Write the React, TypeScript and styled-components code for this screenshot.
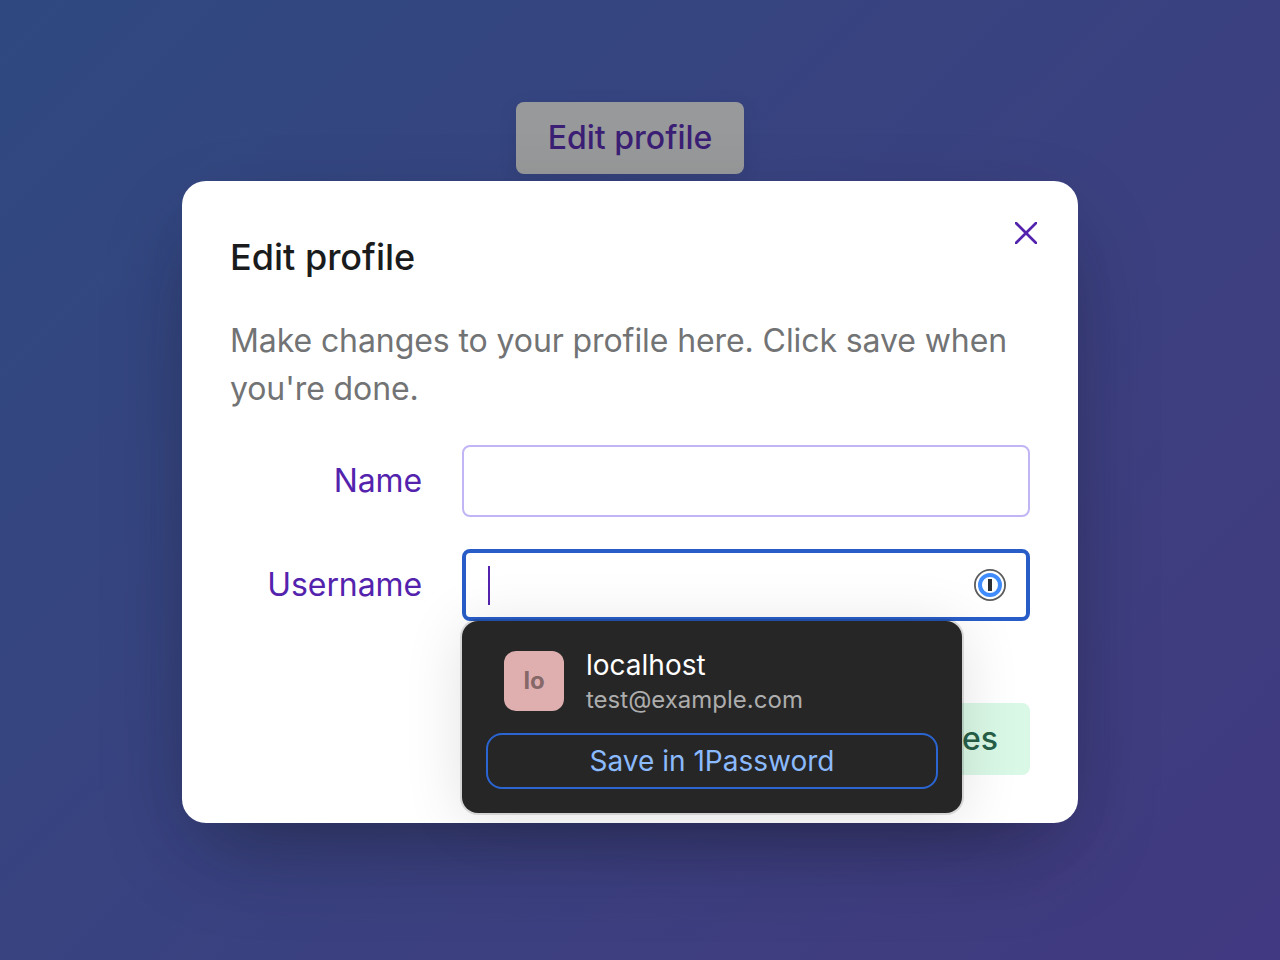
import React from 'react';
import styled, { createGlobalStyle } from 'styled-components';

const Global = createGlobalStyle`
  * { box-sizing: border-box; }
  body { margin: 0; font-family: Inter, "Liberation Sans", sans-serif; }
  button, input { font: inherit; margin: 0; }
`;

const Page = styled.main`
  position: relative;
  height: 960px;
  overflow: hidden;
  display: flex;
  flex-direction: column;
  align-items: center;
  padding: 102px 20px 0 0;
  background: linear-gradient(135deg, #2f4980 0%, #384380 42%, #3e3e80 75%, #413981 100%);
`;

const Trigger = styled.button`
  flex: none;
  width: 228px;
  height: 72px;
  border: 0;
  border-radius: 8px;
  background: #98999a;
  color: #3b1f75;
  font-size: 32px;
  font-weight: 500;
  line-height: 72px;
  padding: 0;
  box-shadow: 0 4px 20px rgba(0, 0, 0, 0.08);
`;

const Dialog = styled.section`
  position: relative;
  flex: none;
  margin-top: 7px;
  width: 896px;
  height: 642px;
  padding: 48px;
  border-radius: 24px;
  background: #fff;
  box-shadow: 0 36px 100px -22px rgba(14, 18, 22, 0.33), 0 30px 60px -36px rgba(14, 18, 22, 0.25);
`;

const Title = styled.h2`
  margin: 0;
  font-size: 36px;
  font-weight: 500;
  line-height: 56px;
  color: #1a1b1d;
`;

const Description = styled.p`
  margin: 32px 0 32px;
  font-size: 32px;
  line-height: 48px;
  letter-spacing: -0.09px;
  color: #727374;
`;

const Close = styled.button`
  position: absolute;
  top: 27px;
  right: 27px;
  width: 50px;
  height: 50px;
  padding: 0;
  border: 0;
  background: none;
  display: grid;
  place-items: center;
`;

const Row = styled.div`
  display: flex;
  align-items: center;
  gap: 40px;
  margin-bottom: 32px;
`;

const Label = styled.label`
  width: 192px;
  padding-bottom: 2px;
  text-align: right;
  font-size: 32px;
  letter-spacing: -0.1px;
  color: #5423ae;
`;

const Field = styled.div<{ $focused?: boolean }>`
  flex: 1;
  height: 72px;
  border-radius: 8px;
  border: ${p => (p.$focused ? '4px solid #285dc8' : '2px solid #c2b5f5')};
  display: flex;
  align-items: center;
  justify-content: space-between;
  padding: 0 20px 0 22px;
`;

const Caret = styled.span`
  width: 2px;
  height: 39px;
  margin-top: 1px;
  background: #5423ae;
`;

const Footer = styled.div`
  display: flex;
  justify-content: flex-end;
  margin-top: 82px;
`;

const Save = styled.button`
  height: 72px;
  padding: 0 32px 2px;
  border: 0;
  border-radius: 8px;
  background: #daf8e6;
  color: #275f48;
  font-size: 32px;
  font-weight: 500;
`;

const Popup = styled.aside`
  position: absolute;
  left: 280px;
  top: 440px;
  width: 500px;
  height: 192px;
  padding: 30px 24px 24px;
  border-radius: 16px;
  background: #262626;
  box-shadow: 0 0 0 2px rgba(0, 0, 0, 0.12), 0 6px 60px rgba(0, 0, 0, 0.12);
`;

const Account = styled.div`
  display: flex;
  gap: 22px;
  padding-left: 18px;
  height: 60px;
  margin-bottom: 22px;
`;

const Avatar = styled.div`
  width: 60px;
  height: 60px;
  border-radius: 12px;
  background: #dfafb0;
  color: #866869;
  font-size: 24px;
  font-weight: 700;
  line-height: 60px;
  text-align: center;
`;

const Host = styled.div`
  font-size: 28px;
  line-height: 28px;
  color: #fff;
`;

const Email = styled.div`
  margin-top: 6px;
  font-size: 24px;
  line-height: 30px;
  color: #adadad;
`;

const Store = styled.button`
  width: 100%;
  height: 56px;
  padding: 0;
  border: 2px solid #2b65d2;
  border-radius: 16px;
  background: transparent;
  color: #8bbafd;
  font-size: 28px;
  line-height: 52px;
`;

export default function App() {
  return (
    <Page>
      <Global />
      <Trigger>Edit profile</Trigger>
      <Dialog>
        <Title>Edit profile</Title>
        <Description>Make changes to your profile here. Click save when you're done.</Description>
        <Row><Label>Name</Label><Field /></Row>
        <Row>
          <Label>Username</Label>
          <Field $focused>
            <Caret />
            <svg width="32" height="32" viewBox="0 0 32 32">
              <circle cx="16" cy="16" r="15.1" fill="#fff" stroke="#5c5c5c" strokeWidth="1.8" />
              <circle cx="16" cy="16" r="10" fill="#fff" stroke="#418cfc" strokeWidth="4" />
              <path d="M14 10h4v12h-4z" fill="#2b2f33" />
            </svg>
          </Field>
        </Row>
        <Footer><Save>Save changes</Save></Footer>
        <Close aria-label="Close">
          <svg width="22" height="22" viewBox="0 0 22 22" stroke="#5423ae" strokeWidth="2.7" strokeLinecap="square">
            <path d="M1 1L21 21M21 1L1 21" />
          </svg>
        </Close>
        <Popup>
          <Account>
            <Avatar>lo</Avatar>
            <div><Host>localhost</Host><Email>test@example.com</Email></div>
          </Account>
          <Store>Save in 1Password</Store>
        </Popup>
      </Dialog>
    </Page>
  );
}
